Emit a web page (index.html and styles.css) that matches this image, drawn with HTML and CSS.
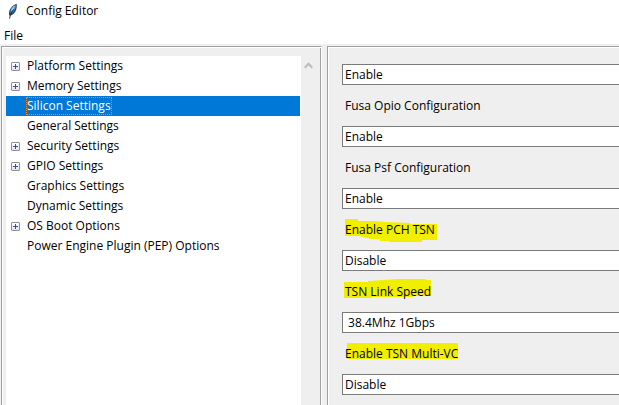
FILE: index.html
```html
<!DOCTYPE html>
<html lang="en">
<head>
<meta charset="utf-8">
<title>Config Editor</title>
<link rel="stylesheet" href="styles.css">
</head>
<body>
<header class="titlebar">
  <svg class="feather" viewBox="0 0 10 16" aria-hidden="true">
    <path d="M1.2 12.2C.3 8.2 2.4 3.5 8.6 .8C9.4 5.8 7.2 11 2.8 12.4Z" fill="#26384d"/>
    <path d="M2.2 10.4C1.6 6.8 3.6 3.4 7.9 1.8C8.2 5.8 6.4 9.6 3.2 11Z" fill="#3c80c2"/>
    <path d="M2.8 8.6C3 6 4.8 3.6 7.2 2.4L5.6 6.4Z" fill="#9bd0f4"/>
    <path d="M5.6 6.4L2.4 11.4L1.6 15.6" fill="none" stroke="#20252d" stroke-width=".9"/>
  </svg>
  <h1 class="title">Config Editor</h1>
</header>
<nav class="menubar"><button class="menu" type="button">File</button></nav>
<main class="workspace">
  <section class="panel navigator">
    <ul class="tree">
      <li class="node"><button class="expander" type="button" aria-label="Expand Platform Settings"></button><span class="name">Platform Settings</span></li>
      <li class="node"><button class="expander" type="button" aria-label="Expand Memory Settings"></button><span class="name">Memory Settings</span></li>
      <li class="node selected"><span class="name">Silicon Settings</span></li>
      <li class="node"><span class="name">General Settings</span></li>
      <li class="node"><button class="expander" type="button" aria-label="Expand Security Settings"></button><span class="name">Security Settings</span></li>
      <li class="node"><button class="expander" type="button" aria-label="Expand GPIO Settings"></button><span class="name">GPIO Settings</span></li>
      <li class="node"><span class="name">Graphics Settings</span></li>
      <li class="node"><span class="name">Dynamic Settings</span></li>
      <li class="node"><button class="expander" type="button" aria-label="Expand OS Boot Options"></button><span class="name">OS Boot Options</span></li>
      <li class="node"><span class="name">Power Engine Plugin (PEP) Options</span></li>
    </ul>
    <div class="scrollbar">
      <svg class="arrow" viewBox="0 0 8 6" aria-hidden="true"><path d="M.7 5L4 1.5L7.3 5" fill="none" stroke="#bdbdbd" stroke-width="1.8"/></svg>
    </div>
  </section>
  <form class="panel settings">
    <div class="field">
      <select class="value" aria-label="Fusa setting"><option>Enable</option></select>
    </div>
    <div class="field">
      <label class="label" for="opio">Fusa Opio Configuration</label>
      <select class="value" id="opio"><option>Enable</option></select>
    </div>
    <div class="field">
      <label class="label" for="psf">Fusa Psf Configuration</label>
      <select class="value" id="psf"><option>Enable</option></select>
    </div>
    <div class="field">
      <label class="label" for="pch"><span class="marked"><svg class="marker" viewBox="0 0 92 24" preserveAspectRatio="none" aria-hidden="true"><path d="M0 1H13V3H30L40 4L65 5V6H92V22H77V24H44V23H35V21H26L14 18H0Z" fill="#f2ee00"/></svg><span class="text">Enable PCH TSN</span></span></label>
      <select class="value" id="pch"><option>Disable</option></select>
    </div>
    <div class="field">
      <label class="label" for="speed"><span class="marked"><svg class="marker short" viewBox="0 0 88 24" preserveAspectRatio="none" aria-hidden="true"><path d="M0 4H24V3L40 2L54 1H82V2H87V18H69V19H28V20H0Z" fill="#f2ee00"/></svg><span class="text">TSN Link Speed</span></span></label>
      <select class="value" id="speed"><option>&nbsp;38.4Mhz 1Gbps</option></select>
    </div>
    <div class="field">
      <label class="label" for="multi"><span class="marked"><svg class="marker long" viewBox="0 0 114 24" preserveAspectRatio="none" aria-hidden="true"><path d="M3 3H114V19H3Z" fill="#f2ee00"/></svg><span class="text">Enable TSN Multi-VC</span></span></label>
      <select class="value" id="multi"><option>Disable</option></select>
    </div>
  </form>
</main>
</body>
</html>
```
FILE: styles.css
```css
* { box-sizing: border-box; }

body {
  display: flex;
  flex-direction: column;
  min-height: 100vh;
  margin: 0;
  background: #fff;
  color: #000;
  font: 12px/20px "Open Sans", "Noto Sans", sans-serif;
}

button, select {
  margin: 0;
  padding: 0;
  border: 0;
  background: none;
  color: inherit;
  font: inherit;
}

.titlebar {
  display: flex;
  align-items: center;
  gap: 8px;
  height: 22px;
  padding-left: 8px;
}

.feather { width: 10px; height: 16px; }

.title { margin: 0; font-size: 12px; font-weight: 400; }

.menubar { display: flex; height: 22px; padding: 4px 4px 0; }

.menu { height: 20px; }

.workspace {
  display: grid;
  flex: 1;
  grid-template-columns: 321px 1fr;
  gap: 5px;
  padding: 2px 0 0 1px;
  background: #efefef;
}

.panel {
  border-top: 1px solid #a0a0a0;
  border-left: 1px solid #a0a0a0;
  box-shadow: inset 1px 1px #fff;
}

.navigator {
  display: flex;
  padding: 9px 0 0 4px;
  border-right: 1px solid #fff;
  box-shadow: inset 1px 1px #fff, inset -1px 0 #a0a0a0;
}

.tree {
  flex: 1;
  margin: 0;
  padding: 0;
  background: #fff;
  list-style: none;
}

.node {
  display: grid;
  grid-template-columns: 20px max-content;
  align-items: center;
  height: 20px;
}

.name {
  grid-column: 2;
  height: 18px;
  border: 1px solid transparent;
  line-height: 16px;
}

.selected { margin-right: 1px; background: #0078d7; color: #fff; }

.selected .name { border: 1px dotted #ff8728; }

.expander {
  width: 9px;
  height: 9px;
  margin-left: 5px;
  border: 1px solid #919191;
  border-radius: 1px;
  background:
    linear-gradient(#32529f, #32529f) center / 5px 1px no-repeat,
    linear-gradient(#32529f, #32529f) center / 1px 5px no-repeat,
    linear-gradient(#fff, #e4e4e4);
}

.scrollbar { width: 20px; padding: 6px 0 0 3px; }

.arrow { display: block; width: 9px; height: 7px; }

.settings {
  display: flex;
  flex-direction: column;
  gap: 11px;
  padding: 17px 0 0 14px;
}

.field { display: flex; flex-direction: column; gap: 10px; }

.label { height: 20px; padding-left: 3px; }

.value {
  width: 100%;
  height: 21px;
  padding-left: 2px;
  border: 1px solid #7a7a7a;
  border-right: 0;
  border-radius: 0;
  background: #fff;
  line-height: 19px;
  appearance: none;
}

.marked { position: relative; }

.marker {
  position: absolute;
  top: -3px;
  left: 0;
  width: 92px;
  height: 24px;
}

.short, .long { top: -5px; left: -1px; }

.short { width: 88px; }

.long { width: 114px; }

.text { position: relative; }
```
